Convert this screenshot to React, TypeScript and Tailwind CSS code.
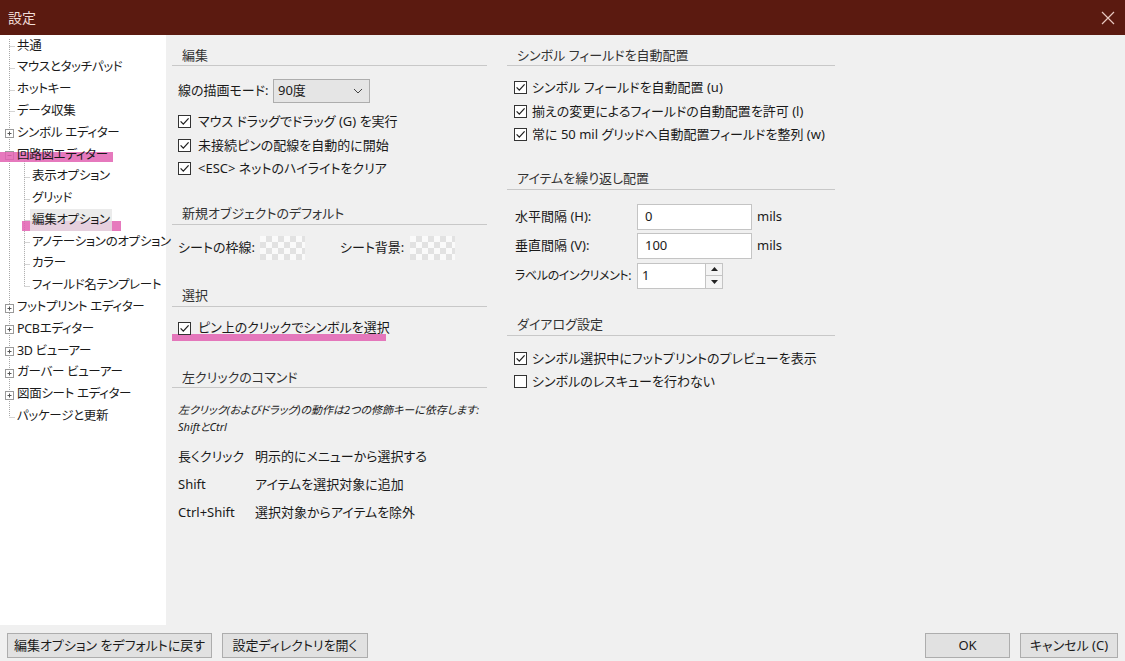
import React from "react";

const Check = ({ checked = true }: { checked?: boolean }) => (
  <span className="w-[13px] h-[13px] border border-[#333333] bg-white flex items-center justify-center shrink-0">
    {checked && (
      <svg width="11" height="11" viewBox="0 0 11 11">
        <path d="M1.6 5.4 L4.3 8.1 L9.6 2.4" stroke="#222" strokeWidth="1.3" fill="none" />
      </svg>
    )}
  </span>
);

const Header = ({ children, className = "" }: { children: React.ReactNode; className?: string }) => (
  <div className={`h-[20px] border-b border-[#c8c8c8] pl-[10px] flex items-center text-[#333] ${className}`}>
    {children}
  </div>
);

const CheckRow = ({ label, checked = true, gap = "gap-[7px]", h = "h-[23.5px]", pl = "pl-[6px]" }: { label: string; checked?: boolean; gap?: string; h?: string; pl?: string }) => (
  <div className={`flex items-center ${gap} ${h} ${pl}`}>
    <Check checked={checked} />
    <span className="whitespace-nowrap">{label}</span>
  </div>
);

const Checker = () => (
  <span className="inline-block w-[45px] h-[24px] bg-[conic-gradient(#e2e2e2_25%,#fafafa_0_50%,#e2e2e2_0_75%,#fafafa_0)] bg-[length:12px_12px]" />
);

const Btn = ({ children, w }: { children: React.ReactNode; w: string }) => (
  <div className={`h-[25px] ${w} bg-[#e1e1e1] border border-[#adadad] flex items-center justify-center whitespace-nowrap text-[#1a1a1a]`}>
    {children}
  </div>
);

type Item = { t: string; lvl: 0 | 1; box?: "plus" | "minus"; sel?: boolean; pink?: boolean };
const items: Item[] = [
  { t: "共通", lvl: 0 },
  { t: "マウスとタッチパッド", lvl: 0 },
  { t: "ホットキー", lvl: 0 },
  { t: "データ収集", lvl: 0 },
  { t: "シンボル エディター", lvl: 0, box: "plus" },
  { t: "回路図エディター", lvl: 0, box: "minus", pink: true },
  { t: "表示オプション", lvl: 1 },
  { t: "グリッド", lvl: 1 },
  { t: "編集オプション", lvl: 1, sel: true, pink: true },
  { t: "アノテーションのオプション", lvl: 1 },
  { t: "カラー", lvl: 1 },
  { t: "フィールド名テンプレート", lvl: 1 },
  { t: "フットプリント エディター", lvl: 0, box: "plus" },
  { t: "PCBエディター", lvl: 0, box: "plus" },
  { t: "3D ビューアー", lvl: 0, box: "plus" },
  { t: "ガーバー ビューアー", lvl: 0, box: "plus" },
  { t: "図面シート エディター", lvl: 0, box: "plus" },
  { t: "パッケージと更新", lvl: 0 },
];

const RH = 21.8;
const cy = (i: number) => 10.9 + i * RH;

const TreeLines = () => {
  const dot = { stroke: "#a8a8a8", strokeWidth: 1, strokeDasharray: "1 1", fill: "none" } as const;
  return (
    <svg className="absolute left-0 top-0 pointer-events-none" width="166" height="400">
      <line x1="9.5" y1="4" x2="9.5" y2={cy(17)} {...dot} />
      <line x1="24.5" y1={cy(5) + 6} x2="24.5" y2={cy(11)} {...dot} />
      {items.map((it, i) => {
        const y = Math.round(cy(i)) + 0.5;
        if (it.lvl === 1) return <line key={i} x1="24.5" y1={y} x2="30" y2={y} {...dot} />;
        if (!it.box) return <line key={i} x1="9.5" y1={y} x2="15" y2={y} {...dot} />;
        return (
          <g key={i}>
            <rect x="5.5" y={y - 4} width="8" height="8" fill="#fff" stroke="#9a9a9a" />
            <line x1="7.5" y1={y} x2="11.5" y2={y} stroke="#555" />
            {it.box === "plus" && <line x1="9.5" y1={y - 2} x2="9.5" y2={y + 2} stroke="#555" />}
          </g>
        );
      })}
    </svg>
  );
};

export default function App() {
  return (
    <div className="w-[1125px] h-[661px] overflow-hidden flex flex-col bg-[#f0f0f0] text-[13px] text-[#1a1a1a] font-['Noto_Sans','Noto_Sans_CJK_JP',sans-serif] [font-feature-settings:'palt']">
      {/* title bar */}
      <div className="h-[35px] shrink-0 bg-[#5b1a10] flex items-center justify-between pl-[8px] pr-[10px]">
        <span className="text-[14px] text-[#f1dcd6]">設定</span>
        <svg width="14" height="14" viewBox="0 0 14 14">
          <path d="M1 1 L13 13 M13 1 L1 13" stroke="#e8c8c0" strokeWidth="1.2" />
        </svg>
      </div>

      <div className="flex flex-1 min-h-0">
        {/* tree */}
        <div className="w-[166px] shrink-0 bg-white relative text-[12.5px] tracking-[-0.3px]">
          <TreeLines />
          {items.map((it, i) => (
            <div key={i} className={`h-[21.8px] flex items-center relative ${it.lvl === 0 ? "pl-[17px]" : "pl-[30px]"}`}>
              {it.pink && (
                <span
                  className={`absolute bg-[#e262b2]/85 ${it.lvl === 0 ? "left-0 w-[113px] top-[8px] h-[10px]" : "left-[22px] w-[99px] top-[12px] h-[10px]"}`}
                />
              )}
              <span className={`relative whitespace-nowrap ${it.lvl === 1 ? "px-[2px]" : ""} ${it.sel ? "bg-[#e6e6e6]/80 h-[22px] flex items-center" : ""}`}>
                {it.t}
              </span>
            </div>
          ))}
        </div>

        {/* main */}
        <div className="flex-1 flex pl-[6px] bg-[#f0f0f0]">
          {/* middle column */}
          <div className="w-[315px] flex flex-col">
            <Header className="mt-[11px]">編集</Header>
            <div className="mt-[13px] h-[24px] flex items-center pl-[6px]">
              <span className="w-[95px] whitespace-nowrap">線の描画モード:</span>
              <div className="w-[97px] h-[24px] bg-[#e5e5e5] border border-[#adadad] flex items-center justify-between pl-[4px] pr-[6px]">
                <span>90度</span>
                <svg width="10" height="6" viewBox="0 0 10 6">
                  <path d="M1 1 L5 5 L9 1" stroke="#444" strokeWidth="1" fill="none" />
                </svg>
              </div>
            </div>
            <div className="mt-[7px]">
              <CheckRow label="マウス ドラッグでドラッグ (G) を実行" />
              <CheckRow label="未接続ピンの配線を自動的に開始" />
              <CheckRow label="<ESC> ネットのハイライトをクリア" />
            </div>

            <Header className="mt-[24px]">新規オブジェクトのデフォルト</Header>
            <div className="mt-[11px] h-[24px] flex items-center pl-[6px]">
              <span className="w-[82px] whitespace-nowrap">シートの枠線:</span>
              <Checker />
              <span className="ml-[35px] w-[70px] whitespace-nowrap">シート背景:</span>
              <Checker />
            </div>

            <Header className="mt-[27px]">選択</Header>
            <div className="mt-[10px] relative">
              <span className="absolute left-0 top-[17px] w-[214px] h-[7px] bg-[#e262b2]/85" />
              <div className="relative">
                <CheckRow label="ピン上のクリックでシンボルを選択" h="h-[23px]" />
              </div>
            </div>

            <Header className="mt-[28.5px]">左クリックのコマンド</Header>
            <div className="mt-[13px] pl-[6px] italic text-[11px] leading-[17px] text-[#222]">
              <div className="whitespace-nowrap">左クリック(およびドラッグ)の動作は2つの修飾キーに依存します:</div>
              <div>ShiftとCtrl</div>
            </div>
            <div className="mt-[7.5px] pl-[6px]">
              {[
                ["長くクリック", "明示的にメニューから選択する"],
                ["Shift", "アイテムを選択対象に追加"],
                ["Ctrl+Shift", "選択対象からアイテムを除外"],
              ].map(([a, b]) => (
                <div key={a} className="h-[28px] flex items-center">
                  <span className="w-[77px] whitespace-nowrap">{a}</span>
                  <span className="whitespace-nowrap">{b}</span>
                </div>
              ))}
            </div>
          </div>

          {/* right column */}
          <div className="w-[328px] ml-[20px] flex flex-col">
            <Header className="mt-[11px]">シンボル フィールドを自動配置</Header>
            <div className="mt-[10px]">
              <CheckRow label="シンボル フィールドを自動配置 (u)" gap="gap-[5px]" pl="pl-[7px]" />
              <CheckRow label="揃えの変更によるフィールドの自動配置を許可 (l)" gap="gap-[5px]" pl="pl-[7px]" />
              <CheckRow label="常に 50 mil グリッドへ自動配置フィールドを整列 (w)" gap="gap-[5px]" pl="pl-[7px]" />
            </div>

            <Header className="mt-[23px]">アイテムを繰り返し配置</Header>
            <div className="mt-[14px] flex flex-col gap-[3.5px] pl-[8px]">
              {[
                ["水平間隔 (H):", "0"],
                ["垂直間隔 (V):", "100"],
              ].map(([l, v]) => (
                <div key={l} className="h-[26px] flex items-center">
                  <span className="w-[122px] whitespace-nowrap">{l}</span>
                  <div className="w-[115px] h-[26px] bg-white border border-[#c4c4c4] flex items-center pl-[7px]">{v}</div>
                  <span className="ml-[5px]">mils</span>
                </div>
              ))}
              <div className="h-[26px] flex items-center">
                <span className="w-[122px] whitespace-nowrap text-[12px] tracking-[-0.4px]">ラベルのインクリメント:</span>
                <div className="w-[68px] h-[26px] bg-white border border-[#c4c4c4] border-r-0 flex items-center pl-[4px]">1</div>
                <div className="w-[18px] h-[26px] flex flex-col border border-[#c4c4c4] bg-[#f4f4f4]">
                  <div className="flex-1 flex items-center justify-center border-b border-[#c4c4c4]">
                    <svg width="7" height="4" viewBox="0 0 7 4"><path d="M0 4 L3.5 0 L7 4 Z" fill="#222" /></svg>
                  </div>
                  <div className="flex-1 flex items-center justify-center">
                    <svg width="7" height="4" viewBox="0 0 7 4"><path d="M0 0 L3.5 4 L7 0 Z" fill="#222" /></svg>
                  </div>
                </div>
              </div>
            </div>

            <Header className="mt-[27px]">ダイアログ設定</Header>
            <div className="mt-[11.5px]">
              <CheckRow label="シンボル選択中にフットプリントのプレビューを表示" gap="gap-[5px]" pl="pl-[7px]" h="h-[23px]" />
              <CheckRow label="シンボルのレスキューを行わない" checked={false} gap="gap-[5px]" pl="pl-[7px]" h="h-[23px]" />
            </div>
          </div>
        </div>
      </div>

      {/* bottom bar */}
      <div className="h-[36px] shrink-0 flex items-start pt-[8px] pl-[7px] pr-[7px] bg-[#f0f0f0]">
        <Btn w="w-[205px]">編集オプション をデフォルトに戻す</Btn>
        <div className="w-[10px]" />
        <Btn w="w-[146px]">設定ディレクトリを開く</Btn>
        <div className="flex-1" />
        <Btn w="w-[85px]">OK</Btn>
        <div className="w-[10px]" />
        <Btn w="w-[98px]">キャンセル (C)</Btn>
      </div>
    </div>
  );
}
